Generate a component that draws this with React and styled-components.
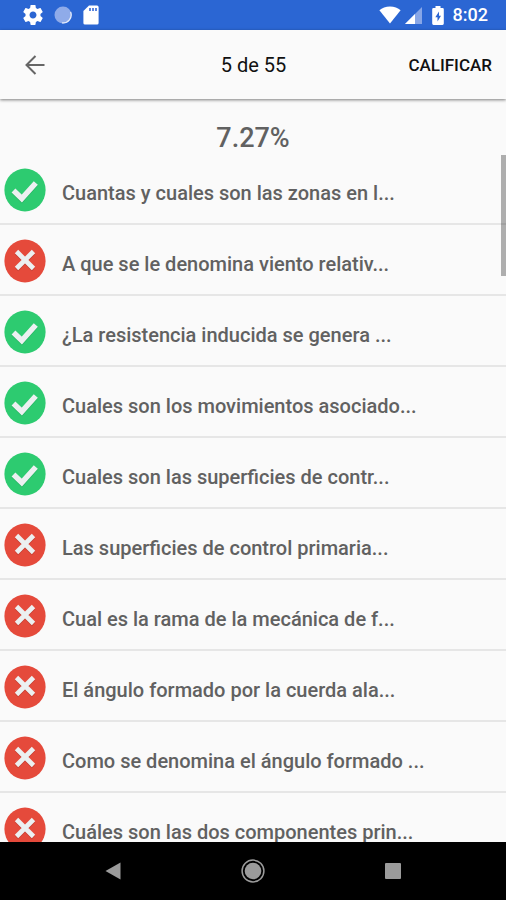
import React from 'react'
import styled, { createGlobalStyle } from 'styled-components'

const questions = [
  { text: 'Cuantas y cuales son las zonas en l...', correct: true },
  { text: 'A que se le denomina viento relativ...', correct: false },
  { text: '¿La resistencia inducida se genera ...', correct: true },
  { text: 'Cuales son los movimientos asociado...', correct: true },
  { text: 'Cuales son las superficies de contr...', correct: true },
  { text: 'Las superficies de control primaria...', correct: false },
  { text: 'Cual es la rama de la mecánica de f...', correct: false },
  { text: 'El ángulo formado por la cuerda ala...', correct: false },
  { text: 'Como se denomina el ángulo formado ...', correct: false },
  { text: 'Cuáles son las dos componentes prin...', correct: false },
]

const SettingsIcon = () => (
  <svg width="20" height="20" viewBox="2 2 20 20" fill="#fff" aria-hidden="true">
    <path d="M19.43 12.98c.04-.32.07-.64.07-.98s-.03-.66-.07-.98l2.11-1.65c.19-.15.24-.42.12-.64l-2-3.46c-.12-.22-.39-.3-.61-.22l-2.49 1c-.52-.4-1.08-.73-1.69-.98l-.38-2.65C14.46 2.18 14.25 2 14 2h-4c-.25 0-.46.18-.49.42l-.38 2.65c-.61.25-1.17.59-1.69.98l-2.49-1c-.23-.09-.49 0-.61.22l-2 3.46c-.13.22-.07.49.12.64l2.11 1.65c-.04.32-.07.65-.07.98s.03.66.07.98l-2.11 1.65c-.19.15-.24.42-.12.64l2 3.46c.12.22.39.3.61.22l2.49-1c.52.4 1.08.73 1.69.98l.38 2.65c.03.24.24.42.49.42h4c.25 0 .46-.18.49-.42l.38-2.65c.61-.25 1.17-.59 1.69-.98l2.49 1c.23.09.49 0 .61-.22l2-3.46c.12-.22.07-.49-.12-.64l-2.11-1.65zM12 15.5c-1.93 0-3.5-1.57-3.5-3.5s1.57-3.5 3.5-3.5 3.5 1.57 3.5 3.5-1.57 3.5-3.5 3.5z" />
  </svg>
)

const SyncIcon = () => (
  <svg width="18" height="18" viewBox="0 0 18 18" aria-hidden="true">
    <circle cx="9" cy="9" r="8.5" fill="#8fabe9" />
    <path d="M16.6 6A8 8 0 0 1 8 16.8" fill="none" stroke="#e4ebfa" strokeWidth="1.3" />
  </svg>
)

const SdCardIcon = () => (
  <svg width="16" height="20" viewBox="0 0 16 20" aria-hidden="true">
    <path d="M6 0.5h8a1.6 1.6 0 0 1 1.6 1.6v15.8a1.6 1.6 0 0 1-1.6 1.6H2a1.6 1.6 0 0 1-1.6-1.6V6z" fill="#fff" />
    <path d="M6 3h2v3H6zM9 3h2v3H9zM12 3h2v3h-2z" fill="#5c86df" />
  </svg>
)

const WifiIcon = () => (
  <svg width="22" height="18" viewBox="0 0 22 18" aria-hidden="true">
    <path d="M11 17.6 0.4 4.2C3 2 6.8 0.5 11 0.5s8 1.5 10.6 3.7z" fill="#fff" />
  </svg>
)

const SignalIcon = () => (
  <svg width="17" height="17" viewBox="0 0 17 17" aria-hidden="true">
    <path d="M0 17 17 0v17z" fill="#87a6e7" />
    <path d="M0 17 10 7v10z" fill="#fff" />
  </svg>
)

const BatteryIcon = () => (
  <svg width="12" height="19" viewBox="0 0 12 19" aria-hidden="true">
    <path d="M3.5 0h5v2h2a1.3 1.3 0 0 1 1.3 1.3v14.3a1.3 1.3 0 0 1-1.3 1.3h-9a1.3 1.3 0 0 1-1.3-1.3V3.3A1.3 1.3 0 0 1 1.5 2h2z" fill="#fff" />
    <path d="M7 5.5 3.3 11.2h2.2v4.3L9 9.8H7z" fill="#2b66d3" />
  </svg>
)

const BackIcon = () => (
  <svg width="20" height="20" viewBox="0 0 20 20" fill="none" stroke="#666" strokeWidth="2" aria-hidden="true">
    <path d="M19.5 10H2M10.5 1l-9 9 9 9" />
  </svg>
)

const CorrectIcon = () => (
  <svg width="42" height="44" viewBox="0 0 42 44" role="img" aria-label="Correcta">
    <ellipse cx="21" cy="22" rx="20.6" ry="21.5" fill="#2dcb70" />
    <path d="M9.5 23.500l8.300 8L31.800 16" fill="none" stroke="#27b463" strokeWidth="5.5" />
    <path d="M9.5 22.5l8.3 8L31.8 15" fill="none" stroke="#ecf0f1" strokeWidth="5.5" />
  </svg>
)

const WrongIcon = () => (
  <svg width="42" height="44" viewBox="0 0 42 44" role="img" aria-label="Incorrecta">
    <ellipse cx="21" cy="22" rx="20.6" ry="21.5" fill="#e54a3b" />
    <path d="M12.5 13.5l17 17M29.5 13.5l-17 17" stroke="#c43c30" strokeWidth="4.8" />
    <path d="M12.5 12.5l17 17M29.5 12.5l-17 17" stroke="#ecf0f1" strokeWidth="4.8" />
  </svg>
)

const App = () => {
  return (
    <Screen>
      <GlobalStyle />
      <StatusBar>
        <StatusGroup $gap="11px">
          <SettingsIcon />
          <SyncIcon />
          <SdCardIcon />
        </StatusGroup>
        <StatusGroup $gap="4px">
          <WifiIcon />
          <SignalIcon />
          <BatteryWrap>
            <BatteryIcon />
          </BatteryWrap>
          <Clock>8:02</Clock>
        </StatusGroup>
      </StatusBar>

      <Toolbar>
        <BackButton type="button" aria-label="Volver">
          <BackIcon />
        </BackButton>
        <Title>5 de 55</Title>
        <GradeButton type="button">CALIFICAR</GradeButton>
      </Toolbar>

      <Content>
        <Score>7.27%</Score>
        <List>
          {questions.map(({ text, correct }) => (
            <Row key={text}>
              {correct ? <CorrectIcon /> : <WrongIcon />}
              <Question>{text}</Question>
            </Row>
          ))}
        </List>
        <ScrollThumb />
      </Content>

      <NavBar>
        <NavButton type="button" aria-label="Atrás">
          <svg width="16" height="18" viewBox="0 0 16 18" aria-hidden="true">
            <path d="M15.5 0.5v17L0.5 9z" fill="#9b9b9b" />
          </svg>
        </NavButton>
        <NavButton type="button" aria-label="Inicio">
          <svg width="24" height="24" viewBox="0 0 24 24" aria-hidden="true">
            <circle cx="12" cy="12" r="8.3" fill="#9b9b9b" />
            <circle cx="12" cy="12" r="10.9" fill="none" stroke="#9b9b9b" strokeWidth="1.5" />
          </svg>
        </NavButton>
        <NavButton type="button" aria-label="Recientes">
          <svg width="16" height="16" viewBox="0 0 16 16" aria-hidden="true">
            <rect width="16" height="16" rx="1" fill="#9b9b9b" />
          </svg>
        </NavButton>
      </NavBar>
    </Screen>
  )
}

const GlobalStyle = createGlobalStyle`
  * {
    box-sizing: border-box;
  }

  body {
    margin: 0;
    background: #fafafa;
    font-family: Roboto, sans-serif;
  }

  button {
    border: 0;
    padding: 0;
    background: transparent;
    font-family: inherit;
    cursor: pointer;
  }

  svg {
    display: block;
    flex-shrink: 0;
  }
`

const Screen = styled.div`
  display: flex;
  flex-direction: column;
  height: 100vh;
  overflow: hidden;
`

const StatusBar = styled.div`
  display: flex;
  flex-shrink: 0;
  align-items: center;
  justify-content: space-between;
  height: 30px;
  padding: 0 18px 0 23px;
  background: #2b66d3;
`

const StatusGroup = styled.div`
  display: flex;
  align-items: center;
  gap: ${({ $gap }) => $gap};
`

const BatteryWrap = styled.span`
  margin: 0 5px 0 6px;
`

const Clock = styled.span`
  color: #fff;
  font-size: 18px;
  font-weight: 500;
  line-height: 32px;
`

const Toolbar = styled.header`
  position: relative;
  display: grid;
  flex-shrink: 0;
  grid-template-columns: 1fr auto 1fr;
  align-items: center;
  height: 69px;
  padding: 0 14px 0 25px;
  background: #fafafa;
  box-shadow: 0 1px 3px rgba(0, 0, 0, 0.5);
`

const BackButton = styled.button`
  justify-self: start;
`

const Title = styled.h1`
  margin: 0;
  padding-right: 10px;
  color: #111;
  font-size: 20px;
  font-weight: 400;
  line-height: 24px;
`

const GradeButton = styled.button`
  justify-self: end;
  color: #111;
  font-size: 17px;
  font-weight: 500;
  line-height: 24px;
`

const Content = styled.main`
  position: relative;
  flex: 1;
  min-height: 0;
  padding-top: 24px;
  overflow: hidden;
`

const Score = styled.p`
  margin: 0;
  color: #616161;
  font-size: 27px;
  font-weight: 500;
  line-height: 31px;
  text-align: center;
`

const List = styled.ul`
  margin: 0;
  padding: 0;
  list-style: none;
`

const Row = styled.li`
  display: flex;
  align-items: center;
  gap: 16px;
  height: 71px;
  padding: 2px 4px 0;
  border-bottom: 2px solid #e6e6e6;
`

const Question = styled.span`
  padding-top: 6px;
  color: #616161;
  font-size: 20px;
  font-weight: 500;
  line-height: 24px;
  white-space: nowrap;
`

/* floats above the list at the right edge */
const ScrollThumb = styled.div`
  position: absolute;
  top: 56px;
  right: 0;
  width: 5px;
  height: 121px;
  background: rgba(0, 0, 0, 0.3);
`

const NavBar = styled.nav`
  display: flex;
  flex-shrink: 0;
  align-items: center;
  justify-content: center;
  height: 58px;
  background: #000;
`

const NavButton = styled.button`
  display: flex;
  align-items: center;
  justify-content: center;
  width: 140px;
  height: 58px;
`

export default App
